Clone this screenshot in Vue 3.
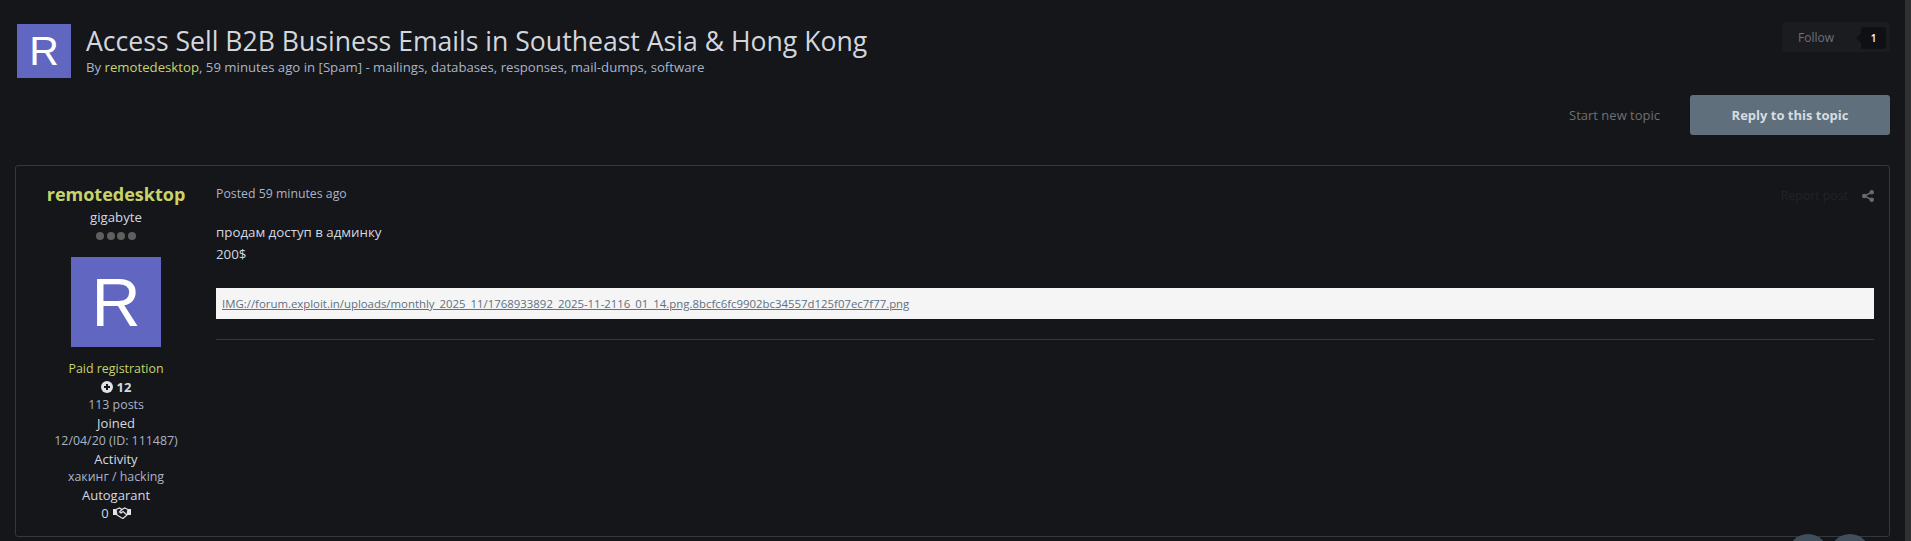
<template>
  <div class="page">
    <header class="topic-head">
      <div class="head-avatar">R</div>
      <div class="head-text">
        <h1>Access Sell B2B Business Emails in Southeast Asia &amp; Hong Kong</h1>
        <p>By <a class="author">remotedesktop</a>, 59 minutes ago in [Spam] - mailings, databases, responses, mail-dumps, software</p>
      </div>
      <div class="follow">
        <span>Follow</span>
        <b class="follow-count">1</b>
      </div>
    </header>

    <div class="actions">
      <a class="start">Start new topic</a>
      <a class="reply">Reply to this topic</a>
    </div>

    <article class="post">
      <aside class="author-col">
        <h3>remotedesktop</h3>
        <div class="rank">gigabyte</div>
        <div class="pips"><i v-for="n in 4" :key="n"></i></div>
        <div class="avatar">R</div>
        <div class="group">Paid registration</div>
        <div class="rep">
          <svg width="12" height="12" viewBox="0 0 12 12"><circle cx="6" cy="6" r="6" fill="#dfe3e8" /><path d="M6 3v6M3 6h6" stroke="#14161a" stroke-width="2" /></svg>
          <b>12</b>
        </div>
        <div class="soft">113 posts</div>
        <div class="label">Joined</div>
        <div class="soft">12/04/20 (ID: 111487)</div>
        <div class="label">Activity</div>
        <div class="soft">хакинг / hacking</div>
        <div class="label">Autogarant</div>
        <div class="garant">
          0
          <svg width="18" height="12" viewBox="0 0 18 12" fill="none">
            <path d="M0 2h3l1 6H0zM18 2h-3l-1 6h4z" fill="#dfe3e8" />
            <path d="M3 2.500 6.500 1 9 2.500 11.500 1 15 2.500 14 8 10 11.500 8 10.500 4 8z" stroke="#dfe3e8" stroke-width="1.200" />
            <path d="M9 2.500 6.500 5 8 6 10 4.500 14 8" stroke="#dfe3e8" stroke-width="1.200" />
          </svg>
        </div>
      </aside>

      <div class="post-main">
        <div class="post-meta">
          <span>Posted 59 minutes ago</span>
          <div class="post-tools">
            <span class="report">Report post</span>
            <svg width="12" height="12" viewBox="0 0 12 12" fill="#666a70">
              <circle cx="9.700" cy="2.300" r="2.300" /><circle cx="9.700" cy="9.700" r="2.300" /><circle cx="2.300" cy="6" r="2.300" />
              <path d="M2.300 6 9.700 2.300M2.300 6l7.400 3.700" stroke="#666a70" stroke-width="1.400" />
            </svg>
          </div>
        </div>
        <div class="post-body">
          <p>продам доступ в админку</p>
          <p>200$</p>
        </div>
        <div class="img-link">
          <a>IMG://forum.exploit.in/uploads/monthly_2025_11/1768933892_2025-11-2116_01_14.png.8bcfc6fc9902bc34557d125f07ec7f77.png</a>
        </div>
        <hr />
      </div>
    </article>

    <div class="float-btns"><i></i><i></i></div>
    <div class="scrollbar"></div>
  </div>
</template>

<script setup>
</script>

<style>
html, body { margin: 0; height: 541px; overflow: hidden; background: #14161a; }
</style>

<style scoped>
.page {
  position: relative;
  height: 541px;
  overflow: hidden;
  box-sizing: border-box;
  padding: 24px 21px 0 15px;
  background: #14161a;
  color: #d5d9e0;
  font: 13px/18px "Open Sans", sans-serif;
}
.topic-head { display: flex; align-items: flex-start; padding-left: 2px; }
.head-avatar {
  width: 54px;
  height: 54px;
  margin-right: 15px;
  background: #6167c0;
  color: #fff;
  font: 41px/54px "Liberation Sans", sans-serif;
  text-align: center;
}
.head-text { flex: 1; }
h1 { margin: 1px 0 0; font-size: 26.600px; line-height: 32px; font-weight: 400; color: #d3d7dd; }
.head-text p { margin: 1px 0 0; color: #a9b4c6; font-size: 13.200px; }
.author { color: #c9d36b; }
.follow {
  display: flex;
  align-items: center;
  justify-content: space-between;
  box-sizing: border-box;
  width: 108px;
  height: 30px;
  margin-top: -2px;
  padding: 1px 4px 0 16px;
  border-radius: 3px;
  background: #1a1c20;
  color: #6d7178;
  font-size: 12px;
}
.follow-count {
  position: relative;
  width: 25px;
  height: 22px;
  border-radius: 3px;
  background: #0f1013;
  color: #fff;
  font-size: 10px;
  line-height: 22px;
  font-weight: 600;
  text-align: center;
}
.follow-count::before {
  content: "";
  position: absolute;
  left: -5px;
  top: 6px;
  border: 5px solid transparent;
  border-left: 0;
  border-right-color: #0f1013;
}
.actions { display: flex; justify-content: flex-end; align-items: center; gap: 30px; margin-top: 17px; }
.start { color: #6d7075; font-size: 13px; }
.reply {
  width: 200px;
  height: 40px;
  border-radius: 3px;
  background: #5f707c;
  color: #d8dce0;
  font-size: 13px;
  font-weight: 700;
  line-height: 40px;
  text-align: center;
}
.post {
  display: flex;
  box-sizing: border-box;
  height: 372px;
  margin-top: 30px;
  padding: 17px 15px 0 0;
  border: 1px solid #35373c;
  border-radius: 3px;
}
.author-col { width: 200px; text-align: center; flex: none; font-size: 12.400px; }
h3 { margin: 0 0 3px; font-size: 18px; line-height: 22px; font-weight: 700; color: #c9d36b; }
.rank { font-size: 13.200px; line-height: 19px; }
.pips { display: flex; justify-content: center; gap: 2.500px; margin-top: 5px; }
.pips i { width: 8px; height: 8px; border-radius: 50%; background: #5f5f5f; }
.avatar {
  width: 90px;
  height: 90px;
  margin: 17px auto 13px;
  background: #6167c0;
  color: #fff;
  font: 68px/90px "Liberation Sans", sans-serif;
}
.group { color: #c9d36b; }
.rep { display: flex; justify-content: center; align-items: center; gap: 4px; font-size: 13px; }
.rep b { font-weight: 700; }
.soft { color: #a9b4c6; }
.label { font-size: 13px; }
.garant { display: flex; justify-content: center; align-items: center; gap: 4px; font-size: 13px; }
.post-main { flex: 1; padding-top: 2px; }
.post-meta { display: flex; justify-content: space-between; align-items: center; color: #a9b4c6; font-size: 12.300px; }
.post-tools { display: flex; align-items: center; gap: 14px; position: relative; top: 2px; }
.report { color: #212328; }
.post-body { margin-top: 20px; font-size: 13.300px; }
.post-body p { margin: 0 0 4px; line-height: 18px; }
.img-link {
  box-sizing: border-box;
  height: 31px;
  margin-top: 25px;
  padding: 0 6px;
  background: #f5f5f5;
  font-size: 11.400px;
  line-height: 31px;
}
.img-link a { color: #5f7080; text-decoration: underline; }
hr { margin: 20px 0 0; border: 0; border-top: 1px solid #35373c; }
.float-btns { position: absolute; right: 41px; top: 534px; display: flex; gap: 2px; }
.float-btns i { width: 40px; height: 40px; border-radius: 50%; background: #3f4f5b; }
.scrollbar { position: absolute; right: 0; top: 0; bottom: 0; width: 6px; background: #2f3032; }
</style>
